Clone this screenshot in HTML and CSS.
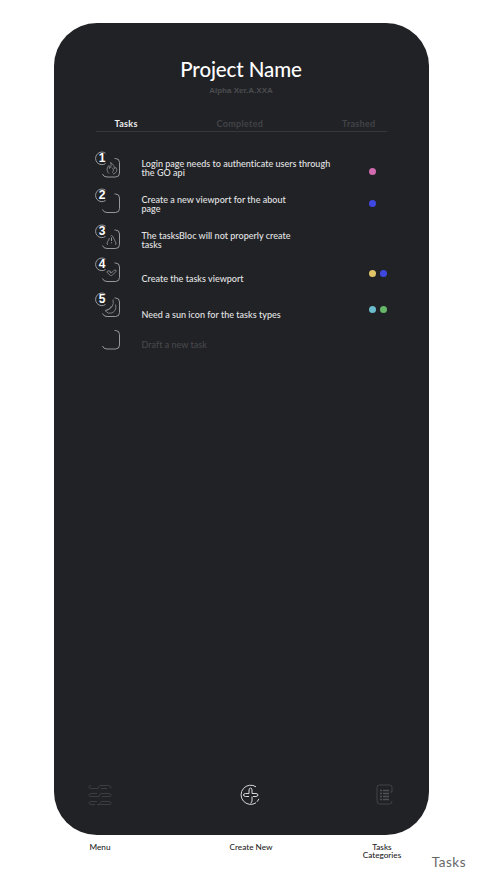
FILE: index.html
```
<!DOCTYPE html>
<html lang="en">
<head>
<meta charset="utf-8">
<title>Tasks</title>
<link rel="stylesheet" href="styles.css">
</head>
<body>
<svg class="defs" width="0" height="0" aria-hidden="true">
  <defs>
    <g id="box"><path d="M20.5 8.500h1q4 0 4 4V23q0 4-4 4H13q-3.500 0-4.500-3"/></g>
    <g id="ring"><path d="M11.500 3.200A6.300 6.300 0 1 0 11.500 13.500"/></g>
  </defs>
</svg>
<main class="phone">
  <header class="heading">
    <h1>Project Name</h1>
    <p>Alpha Xer.A.XXA</p>
  </header>
  <nav class="tabs">
    <span class="active">Tasks</span><span>Completed</span><span>Trashed</span>
  </nav>
  <ul class="tasks">
    <li class="task r1">
      <div class="mark"><svg viewBox="0 0 30 30"><use href="#box"/><use href="#ring"/><path class="thin" d="M15 23.500c-3-3-2-6 0-8l.5 3c2-2 2-4 1-6 3 2 4 4 4 6l1.500-1c2 3 0 6-3 6.500M18 17.500c2 2 2 4 0 5"/></svg><b>1</b></div>
      <p>Login page needs to authenticate users through<br>the GO api</p>
      <div class="dots"><i class="pink"></i></div>
    </li>
    <li class="task r2">
      <div class="mark"><svg viewBox="0 0 30 30"><use href="#box" y="-1.500"/><use href="#ring"/></svg><b>2</b></div>
      <p>Create a new viewport for the about<br>page</p>
      <div class="dots"><i class="blue"></i></div>
    </li>
    <li class="task r3">
      <div class="mark"><svg viewBox="0 0 30 30"><use href="#box" y="-1.500"/><use href="#ring"/><path class="thin" d="M15.500 15 13 20q-.5 1.500 1 1.500M21 21.500q1.500 0 1-1.500l-3.500-7q-1-1-2 0"/><path d="M17.500 14.500v3.500M17.500 19.300v1"/></svg><b>3</b></div>
      <p>The tasksBloc will not properly create<br>tasks</p>
      <div class="dots"></div>
    </li>
    <li class="task r4">
      <div class="mark"><svg viewBox="0 0 30 30"><use href="#box" y="-1.500"/><use href="#ring"/><path class="thin" d="M17 16q-2-2-3.500-1-1 1 0 2l3 2.500q1 .5 2-.5l3.500-3.500q.5-1.500-1-1.500-1 0-2 1.500l-2 1.500-1.500-1"/></svg><b>4</b></div>
      <p>Create the tasks viewport</p>
      <div class="dots"><i class="yellow"></i><i class="blue"></i></div>
    </li>
    <li class="task r5">
      <div class="mark"><svg viewBox="0 0 30 30"><use href="#box" y="-1.500"/><use href="#ring"/><path class="thin" d="M19 8.500q2 9-8 11 3 4 7 2.500 5-2.500 3.500-8.500M17.500 15q-1.500 3.500-5 4.500"/></svg><b>5</b></div>
      <p>Need a sun icon for the tasks types</p>
      <div class="dots"><i class="cyan"></i><i class="green"></i></div>
    </li>
    <li class="task r6 draft">
      <div class="mark"><svg viewBox="0 0 30 30"><use href="#box"/></svg></div>
      <p>Draft a new task</p>
      <div class="dots"></div>
    </li>
  </ul>
  <footer class="actions">
    <svg class="menu" width="24" height="22" viewBox="0 0 24 22"><path d="M3 1.500Q1 1.500 1 3t2 1.500h7l1.500-3h9q2.500 0 2.500 3M13 4.500h6M9 9.500H3q-2 0-2 1.500t2 1.500h8l1.500-3h8.500q2 0 2 1.500t-2 1.500h-7M9 17.500H3q-2 0-2 1.500t2 1.500h4M9 20.500h12q2 0 2-1.500t-2-1.500h-8l-1.500 2"/></svg>
    <svg class="create" width="22" height="22" viewBox="0 0 22 22"><path d="M17 2.800A9.600 9.600 0 1 0 17 18.800M18 17.800l2-3"/><path d="M14 12.500h3q2-.2 2-1.500t-2-1.500h-4V6q-.2-2-1.500-2T10 6v3.500H6.500q-2 .2-2 1.500t2 1.500H10M13 12.500V17q-.2 2-1.500 2"/></svg>
    <svg class="list" width="17" height="21" viewBox="0 0 17 21"><path d="M16 8V3.500Q16 1 13.500 1h-10Q1 1 1 3.500v13Q1 20 3.500 20h10q2.500 0 2.500-3M16 8h-2"/><path class="bars" d="M4 6.500h2m1 0h6M4 9.500h2m1 0h6M4 12.500h2m1 0h6M4 15.500h2m1 0h6"/></svg>
  </footer>
</main>
<section class="captions">
  <span>Menu</span><span>Create New</span><span>Tasks<br>Categories</span>
</section>
<p class="page-label">Tasks</p>
</body>
</html>
```

FILE: styles.css
```
* { box-sizing: border-box; margin: 0; padding: 0; }
body {
  width: 486px;
  height: 887px;
  padding-top: 22.5px;
  overflow: hidden;
  background: #fff;
  font-family: Lato, sans-serif;
}
.defs { position: absolute; }
svg { display: block; fill: none; }
.phone {
  display: flex;
  flex-direction: column;
  width: 375px;
  height: 812px;
  margin-left: 53.5px;
  border-radius: 43px;
  background: #212226;
  color: #e4e4e5;
}
.heading { height: 90px; padding-top: 32px; text-align: center; }
.heading h1 {
  font: 500 20.500px/28px Lato, sans-serif;
  letter-spacing: -0.1px;
  color: #fff;
}
.heading p {
  padding-top: 2px;
  font: 700 8px/12px "Liberation Sans", sans-serif;
  color: #4b4c4f;
}
.tabs {
  display: flex;
  justify-content: space-between;
  height: 19px;
  margin: 0 41.5px 0 42.5px;
  padding: 4px 11.5px 0 18.5px;
  border-bottom: 1px solid #37383b;
  font: 700 9px/14px Lato, sans-serif;
  letter-spacing: 0.3px;
  color: #414246;
}
.tabs .active { color: #eee; }
.tasks { height: 640px; flex: none; padding-top: 18.5px; list-style: none; }
.task {
  display: grid;
  grid-template-columns: 47px 228px 40px;
  margin-left: 40.5px;
}
.task p { padding-left: 0.5px; font-size: 9px; font-weight: 500; line-height: 9px; letter-spacing: 0.02px; white-space: nowrap; }
.mark { position: relative; width: 30px; height: 30px; }
.mark svg { width: 30px; height: 30px; stroke: #a4a5a7; stroke-width: 0.9; }
.mark .thin { stroke-width: 0.8; stroke: #929395; }
.mark b {
  position: absolute;
  left: 4px;
  top: 2px;
  width: 8px;
  text-align: center;
  font: 700 12px/13px "Liberation Sans", sans-serif;
  color: #fff;
}
.dots { display: flex; gap: 4px; }
.dots i { flex: none; width: 7px; height: 7px; border-radius: 50%; }
.pink { background: #d16aae; }
.blue { background: #3e48e0; }
.yellow { background: #dfc568; }
.cyan { background: #6abccd; }
.green { background: #67b768; }
.r1 { height: 37px; }
.r1 p { padding-top: 9px; }
.r1 .dots { padding-top: 18px; }
.r2 { height: 36px; }
.r2 p, .r3 p { padding-top: 8px; }
.r2 .dots { padding-top: 13px; }
.r3 { height: 33px; }
.r4 { height: 35px; }
.r4 p { padding-top: 18px; }
.r4 .dots { padding-top: 13.500px; }
.r5 { height: 31px; }
.r5 p { padding-top: 19px; }
.r5 .dots { padding-top: 14.500px; }
.r6 p { padding-top: 18px; }
.draft p { color: #47484b; }
.actions {
  display: grid;
  grid-template-columns: 24px 1fr 17px;
  justify-items: center;
  align-items: center;
  height: 22px;
  margin: 12px 36px 0 34px;
}
.actions svg { stroke-width: 1; }
.actions .create { margin-left: 13.5px; }
.menu { stroke: #3c3d40; }
.create { stroke: #d8d8d9; }
.list { stroke: #424346; }
.list .bars { stroke-width: 1.700; stroke: #505154; }
.captions {
  display: grid;
  grid-template-columns: 80px 1fr 80px;
  margin: 8px 64px 0 60px;
  text-align: center;
  font: 500 8.200px/8px Lato, sans-serif;
  color: #242424;
}
.captions span:nth-child(2) { padding-left: 20px; }
.page-label {
  margin: -5px 20px 0 0;
  text-align: right;
  font: 400 13.500px/16px Lato, sans-serif;
  letter-spacing: 0.5px;
  color: #666;
}
```
